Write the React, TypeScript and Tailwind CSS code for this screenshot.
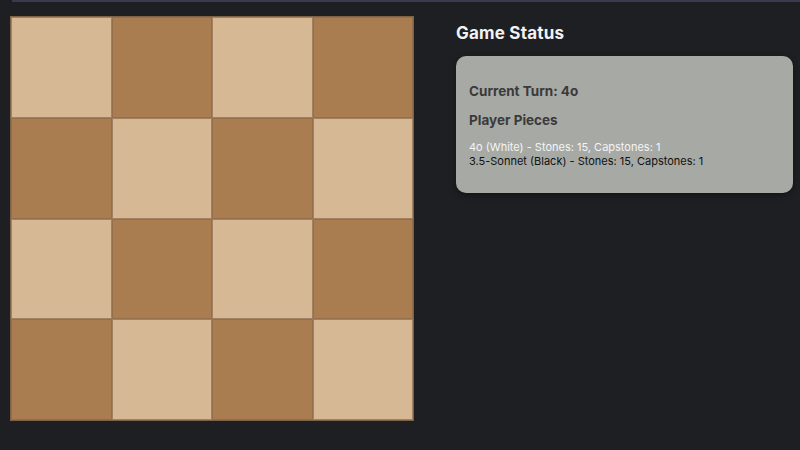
import React from "react";

const SIZE = 4;

export default function App() {
  const cells = Array.from({ length: SIZE * SIZE }, (_, i) => i);

  return (
    <div
      className="w-[800px] h-[450px] bg-[#1e1f23] overflow-hidden"
      style={{ fontFamily: "Inter, 'Open Sans', sans-serif" }}
    >
      <div className="ml-[12px] h-[2px] bg-[#3b3850]" />

      <div className="flex items-start pl-[10px] pt-[14px] gap-[42px]">
        {/* Board */}
        <div className="grid grid-cols-4 w-[404px] h-[405px] border border-[#7d6248] shrink-0">
          {cells.map((i) => {
            const row = Math.floor(i / SIZE);
            const col = i % SIZE;
            const light = (row + col) % 2 === 0;
            return (
              <div
                key={i}
                className={`border border-[#8a6a4c]/70 ${light ? "bg-[#d6b895]" : "bg-[#aa7d50]"}`}
              />
            );
          })}
        </div>

        {/* Status */}
        <div className="w-[337px] pt-[5px]">
          <h2 className="text-[17px] font-bold text-[#f2f2f2] leading-[24px] tracking-[0.2px]">
            Game Status
          </h2>
          <div className="mt-[11px] h-[137px] rounded-[10px] bg-[#a7a9a5] shadow-[0_2px_6px_rgba(0,0,0,0.4)] px-[13px] pt-[25px]">
            <h3 className="text-[13.5px] font-bold text-[#3a3a3a] leading-[20px]">
              Current Turn: 4o
            </h3>
            <h3 className="mt-[9px] text-[13.5px] font-bold text-[#3a3a3a] leading-[20px]">
              Player Pieces
            </h3>
            <div className="mt-[10px] text-[11px] leading-[14px]">
              <div className="text-[#f4f4f4]">4o (White) - Stones: 15, Capstones: 1</div>
              <div className="text-[#111111]">3.5-Sonnet (Black) - Stones: 15, Capstones: 1</div>
            </div>
          </div>
        </div>
      </div>
    </div>
  );
}
